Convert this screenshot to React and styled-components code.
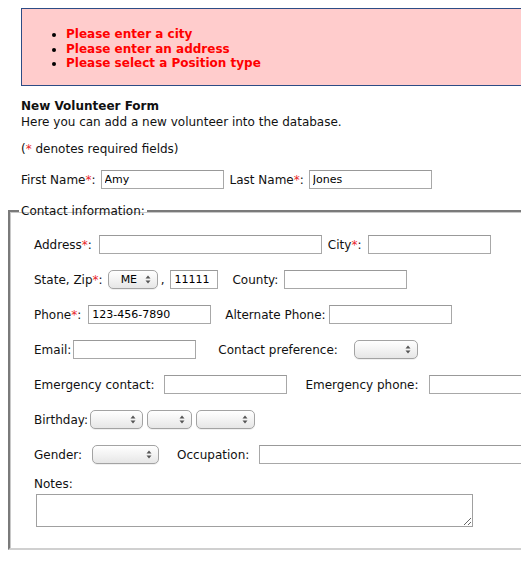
import React from 'react'
import styled, { createGlobalStyle } from 'styled-components'

const Global = createGlobalStyle`
  html, body { overflow: hidden; }
  body {
    margin: 0;
    background: #fff;
    color: #111;
    font-family: "DejaVu Sans", Verdana, sans-serif;
    font-size: 12px;
  }
`

const Page = styled.div`
  width: 600px;
  padding: 8px 0 0 21px;
`

const ErrorBox = styled.div`
  background: #ffcccc;
  border: 1px solid #2d4c85;
  height: 76px;
  box-sizing: content-box;
  ul {
    margin: 0;
    padding: 18px 0 0 44px;
    list-style: disc;
  }
  li {
    color: #f00;
    font-weight: bold;
    line-height: 14.5px;
  }
  li::marker { color: #000; }
`

const Title = styled.div`
  margin-top: 12px;
  font-weight: bold;
  line-height: 16px;
`

const Text = styled.p`
  margin: ${p => p.$top || 0}px 0 0;
  line-height: 16px;
`

const Star = styled.span`
  color: #e8262a;
`

const Row = styled.div`
  display: flex;
  align-items: center;
  height: 19px;
  margin-top: ${p => p.$top || 0}px;
`

const Field = styled.label`
  display: flex;
  align-items: center;
  gap: ${p => p.$gap ?? 5}px;
  margin-left: ${p => p.$left || 0}px;
  white-space: nowrap;
`

const Input = styled.input`
  box-sizing: border-box;
  width: ${p => p.$w || 123}px;
  height: 19px;
  margin: 0;
  padding: 0 3px;
  border: 1px solid #a8a8a8;
  border-top-color: #999;
  font-family: "DejaVu Sans", Verdana, sans-serif;
  font-size: 11px;
  color: #000;
  background: #fff;
  outline: none;
`

const SelectWrap = styled.span`
  position: relative;
  display: inline-block;
  margin-left: ${p => p.$left || 0}px;
  width: ${p => p.$w}px;
  height: 19px;
  svg {
    position: absolute;
    right: 7px;
    top: 5px;
    pointer-events: none;
  }
`

const Select = styled.select`
  appearance: none;
  box-sizing: border-box;
  width: 100%;
  height: 19px;
  margin: 0;
  padding: 0 0 0 12px;
  border: 1px solid #a3a3a3;
  border-radius: 5px;
  background: linear-gradient(#ffffff, #f3f3f3 50%, #e6e6e6);
  font-family: "DejaVu Sans", Verdana, sans-serif;
  font-size: 11px;
  color: #000;
  box-shadow: 0 1px 0 rgba(0,0,0,0.06);
`

const Arrows = () => (
  <svg width="6" height="9" viewBox="0 0 6 9">
    <path d="M3 0.5 L5.5 3.5 L0.5 3.5 Z" fill="#555" />
    <path d="M3 8.5 L5.5 5.5 L0.5 5.5 Z" fill="#555" />
  </svg>
)

const Dropdown = ({ w, left, value }) => (
  <SelectWrap $w={w} $left={left}>
    <Select defaultValue={value || ''}>
      <option value="">{''}</option>
      {value && <option value={value}>{value}</option>}
    </Select>
    <Arrows />
  </SelectWrap>
)

const Fieldset = styled.fieldset`
  width: 560px;
  margin: 14px 0 0 -13px;
  padding: 6px 0 21px 24px;
  border-color: #7a7a7a #d0d0d0 #d0d0d0 #7a7a7a;
  border-style: solid;
  border-width: 2px;
  box-shadow: inset 1px 1px 0 #c8c8c8;
  min-width: 0;
`

const Legend = styled.legend`
  margin-left: -15px;
  padding: 0 2px;
  line-height: 16px;
`

const Comma = styled.span`
  margin: 0 6px 0 3px;
`

const NotesLabel = styled.div`
  margin-top: 12px;
  line-height: 16px;
`

const Notes = styled.textarea`
  display: block;
  box-sizing: border-box;
  width: 437px;
  height: 33px;
  margin: 2px 0 0 2px;
  border: 1px solid #a0a0a0;
  resize: both;
  font-family: "DejaVu Sans", Verdana, sans-serif;
  font-size: 11px;
`

export default function App() {
  return (
    <Page>
      <Global />
      <ErrorBox>
        <ul>
          <li>Please enter a city</li>
          <li>Please enter an address</li>
          <li>Please select a Position type</li>
        </ul>
      </ErrorBox>

      <Title>New Volunteer Form</Title>
      <Text>Here you can add a new volunteer into the database.</Text>
      <Text $top={11}>(<Star>*</Star> denotes required fields)</Text>

      <Row $top={13}>
        <Field $gap={5}>
          <span>First Name<Star>*</Star>:</span>
          <Input defaultValue="Amy" />
        </Field>
        <Field $gap={5} $left={6}>
          <span>Last Name<Star>*</Star>:</span>
          <Input defaultValue="Jones" />
        </Field>
      </Row>

      <Fieldset>
        <Legend>Contact information:</Legend>

        <Row $top={10}>
          <Field $gap={7}>
            <span>Address<Star>*</Star>:</span>
            <Input $w={223} />
          </Field>
          <Field $gap={7} $left={6}>
            <span>City<Star>*</Star>:</span>
            <Input />
          </Field>
        </Row>

        <Row $top={16}>
          <Field $gap={5}>
            <span>State, Zip<Star>*</Star>:</span>
          </Field>
          <Dropdown w={50} left={5} value="ME" />
          <Comma>,</Comma>
          <Input $w={48} defaultValue="11111" />
          <Field $gap={6} $left={14}>
            <span>County:</span>
            <Input />
          </Field>
        </Row>

        <Row $top={16}>
          <Field $gap={7}>
            <span>Phone<Star>*</Star>:</span>
            <Input defaultValue="123-456-7890" />
          </Field>
          <Field $gap={3} $left={14}>
            <span>Alternate Phone:</span>
            <Input />
          </Field>
        </Row>

        <Row $top={16}>
          <Field $gap={2}>
            <span>Email:</span>
            <Input />
          </Field>
          <Field $gap={16} $left={22}>
            <span>Contact preference:</span>
          </Field>
          <Dropdown w={64} left={16} />
        </Row>

        <Row $top={16}>
          <Field $gap={10}>
            <span>Emergency contact:</span>
            <Input />
          </Field>
          <Field $gap={10} $left={18}>
            <span>Emergency phone:</span>
            <Input />
          </Field>
        </Row>

        <Row $top={16}>
          <span>Birthday:</span>
          <Dropdown w={53} left={2} />
          <Dropdown w={45} left={4} />
          <Dropdown w={59} left={4} />
        </Row>

        <Row $top={16}>
          <span>Gender:</span>
          <Dropdown w={67} left={10} />
          <Field $gap={10} $left={18}>
            <span>Occupation:</span>
            <Input $w={300} />
          </Field>
        </Row>

        <NotesLabel>Notes:</NotesLabel>
        <Notes />
      </Fieldset>
    </Page>
  )
}
